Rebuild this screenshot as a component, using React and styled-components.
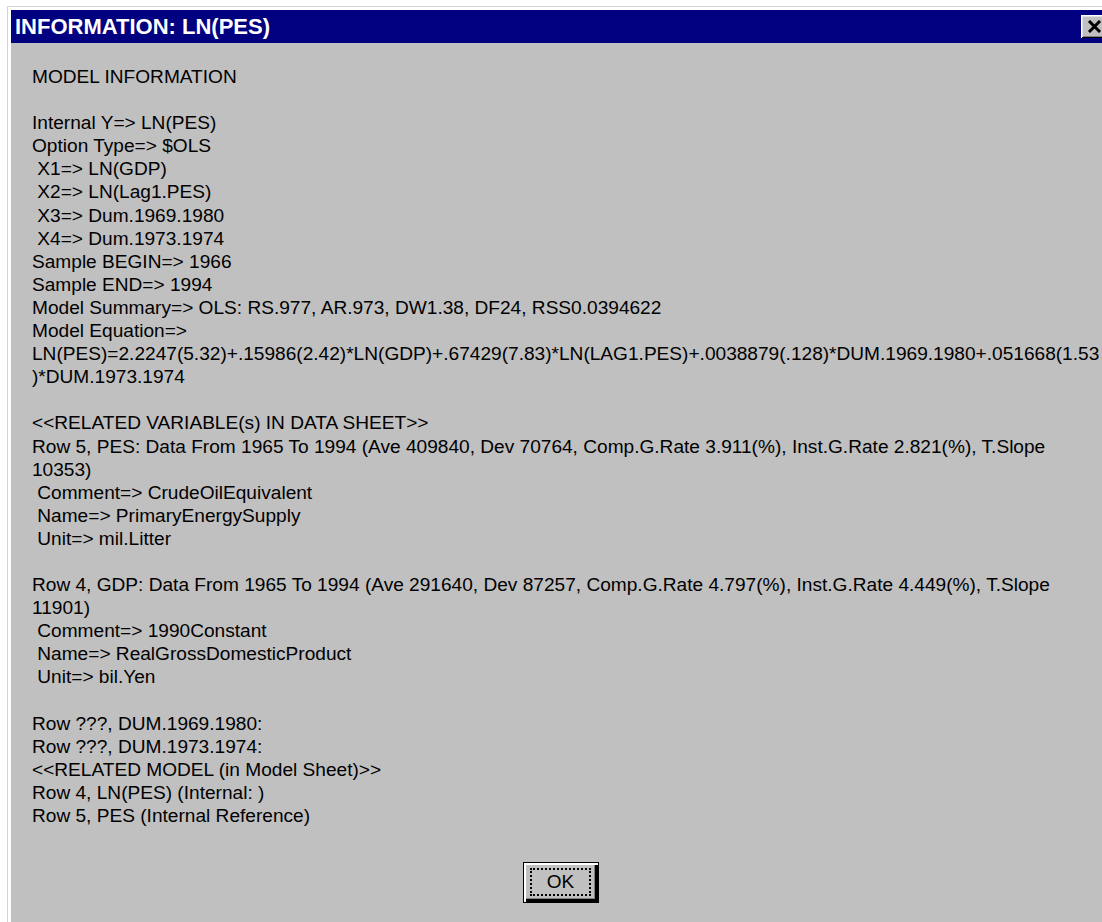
import React from "react";
import styled, { createGlobalStyle } from "styled-components";

const GlobalStyle = createGlobalStyle`
  html, body {
    margin: 0;
    padding: 0;
    background: #ffffff;
    overflow: hidden;
  }
  body {
    width: 1102px;
    height: 922px;
  }
`;

const Window = styled.div`
  margin: 6px 0 0 7px;
  width: 1104px;
  height: 940px;
  box-sizing: border-box;
  border: 1px solid #d4d4d4;
  border-right: none;
  border-bottom: none;
  background: #c0c0c0;
  display: flex;
  flex-direction: column;
`;

const Frame = styled.div`
  flex: 1;
  display: flex;
  flex-direction: column;
  border-top: 3px solid #ffffff;
  border-left: 3px solid #ffffff;
`;

const TitleBar = styled.div`
  height: 33px;
  background: #000080;
  display: flex;
  align-items: center;
  padding: 0 5px 0 4px;
`;

const Title = styled.span`
  flex: 1;
  color: #ffffff;
  font-family: "Liberation Sans", Arial, sans-serif;
  font-weight: bold;
  font-size: 22px;
  line-height: 1;
`;

const CloseButton = styled.button`
  width: 27px;
  height: 23px;
  padding: 0;
  margin-right: -2px;
  background: #c0c0c0;
  border: none;
  box-shadow: inset 1px 1px 0 #ffffff, inset -1px -1px 0 #000000,
    inset 2px 2px 0 #dfdfdf, inset -2px -2px 0 #808080;
  display: flex;
  align-items: center;
  justify-content: center;
`;

const Body = styled.div`
  flex: 1;
  display: flex;
  flex-direction: column;
  padding: 22px 21px 0 21px;
`;

const Info = styled.pre`
  margin: 0;
  font-family: "Liberation Sans", Arial, sans-serif;
  font-size: 19.1px;
  line-height: 23.1px;
  color: #000000;
  white-space: pre;
`;

const Footer = styled.div`
  display: flex;
  justify-content: center;
  padding-top: 35px;
`;

const OkButton = styled.button`
  width: 76px;
  height: 41px;
  padding: 0;
  background: #c0c0c0;
  border: 1px solid #000000;
  box-shadow: inset 2px 2px 0 #ffffff, inset -3px -3px 0 #000000,
    inset -4px -4px 0 #808080;
  display: flex;
  align-items: center;
  justify-content: center;
  font-family: "Liberation Sans", Arial, sans-serif;
  font-size: 19px;
  color: #000000;
`;

const Focus = styled.span`
  width: 61px;
  height: 28px;
  margin: -2px 0 0 -1px;
  box-sizing: border-box;
  border: 2px dotted #000000;
  display: flex;
  align-items: center;
  justify-content: center;
`;

const lines = [
  "MODEL INFORMATION",
  "",
  "Internal Y=> LN(PES)",
  "Option Type=> $OLS",
  " X1=> LN(GDP)",
  " X2=> LN(Lag1.PES)",
  " X3=> Dum.1969.1980",
  " X4=> Dum.1973.1974",
  "Sample BEGIN=> 1966",
  "Sample END=> 1994",
  "Model Summary=> OLS: RS.977, AR.973, DW1.38, DF24, RSS0.0394622",
  "Model Equation=>",
  "LN(PES)=2.2247(5.32)+.15986(2.42)*LN(GDP)+.67429(7.83)*LN(LAG1.PES)+.0038879(.128)*DUM.1969.1980+.051668(1.53",
  ")*DUM.1973.1974",
  "",
  "<<RELATED VARIABLE(s) IN DATA SHEET>>",
  "Row 5, PES: Data From 1965 To 1994 (Ave 409840, Dev 70764, Comp.G.Rate 3.911(%), Inst.G.Rate 2.821(%), T.Slope",
  "10353)",
  " Comment=> CrudeOilEquivalent",
  " Name=> PrimaryEnergySupply",
  " Unit=> mil.Litter",
  "",
  "Row 4, GDP: Data From 1965 To 1994 (Ave 291640, Dev 87257, Comp.G.Rate 4.797(%), Inst.G.Rate 4.449(%), T.Slope",
  "11901)",
  " Comment=> 1990Constant",
  " Name=> RealGrossDomesticProduct",
  " Unit=> bil.Yen",
  "",
  "Row ???, DUM.1969.1980:",
  "Row ???, DUM.1973.1974:",
  "<<RELATED MODEL (in Model Sheet)>>",
  "Row 4, LN(PES) (Internal: )",
  "Row 5, PES (Internal Reference)",
];

export default function App() {
  return (
    <>
      <GlobalStyle />
      <Window>
        <Frame>
          <TitleBar>
            <Title>INFORMATION: LN(PES)</Title>
            <CloseButton aria-label="Close">
              <svg width="15" height="13" viewBox="0 0 15 13">
                <path d="M2 1 L13 12 M13 1 L2 12" stroke="#000" strokeWidth="3" fill="none" />
              </svg>
            </CloseButton>
          </TitleBar>
          <Body>
            <Info>{lines.join("\n")}</Info>
            <Footer>
              <OkButton>
                <Focus>OK</Focus>
              </OkButton>
            </Footer>
          </Body>
        </Frame>
      </Window>
    </>
  );
}
